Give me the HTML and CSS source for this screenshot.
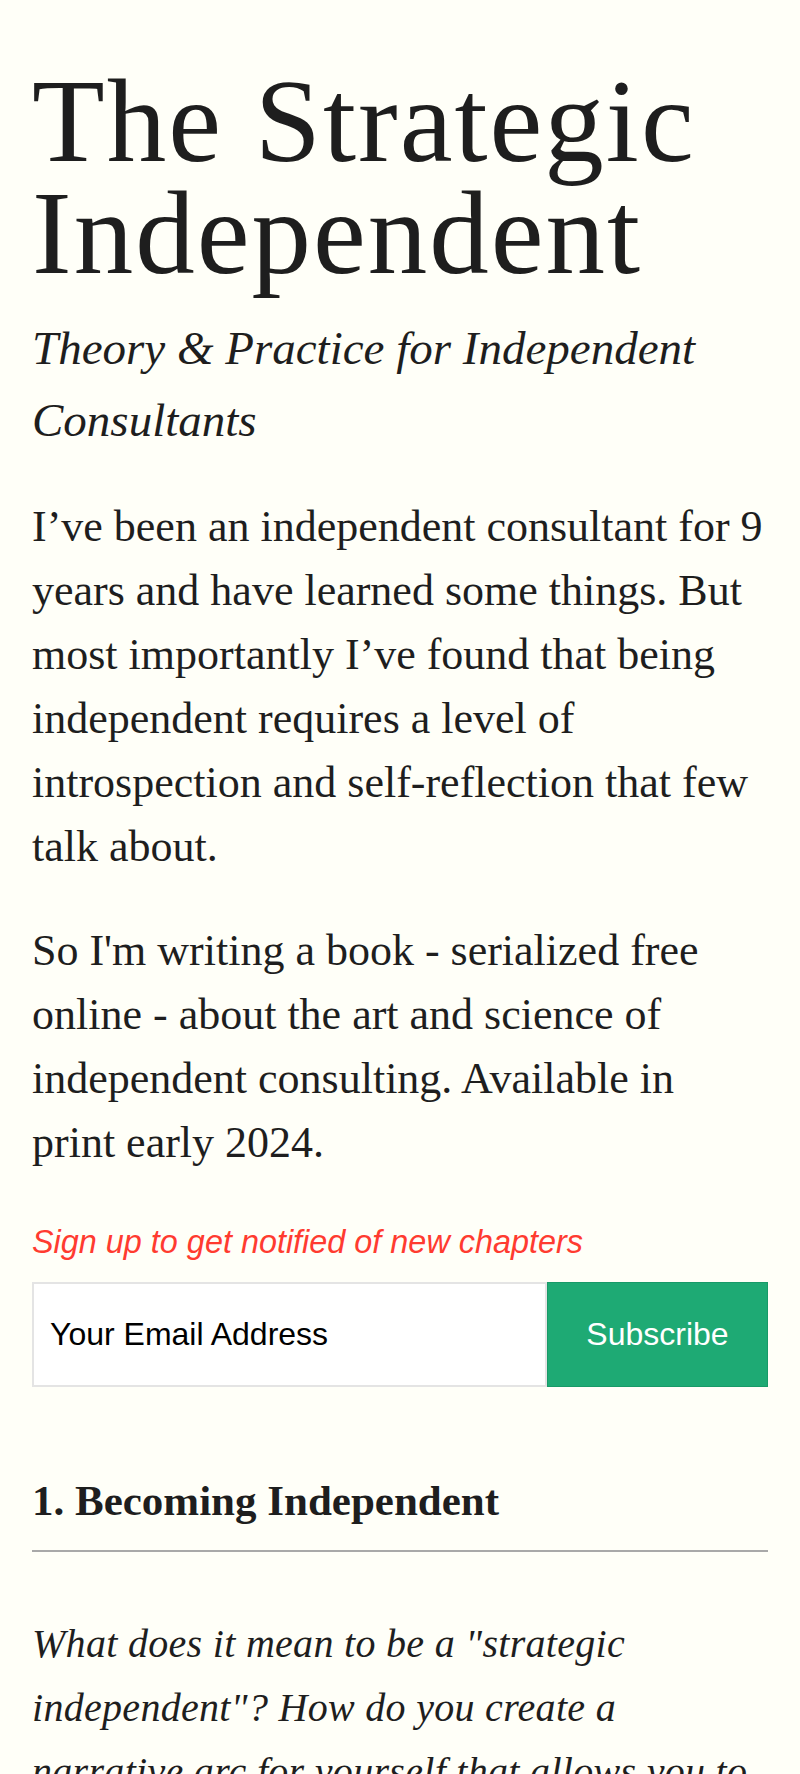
FILE: index.html
```html
<!DOCTYPE html>
<html lang="en">
<head>
<meta charset="utf-8">
<title>The Strategic Independent</title>
<link rel="stylesheet" href="styles.css">
</head>
<body>
<main class="page">
  <header class="masthead">
    <h1 class="title">The Strategic Independent</h1>
    <p class="subtitle">Theory &amp; Practice for Independent Consultants</p>
  </header>

  <section class="intro">
    <p>I’ve been an independent consultant for 9 years and have learned some things. But most importantly I’ve found that being independent requires a level of introspection and self-reflection that few talk about.</p>
    <p>So I'm writing a book - serialized free online - about the art and science of independent consulting. Available in print early 2024.</p>
  </section>

  <section class="signup">
    <p class="signup-label">Sign up to get notified of new chapters</p>
    <form class="signup-form">
      <input class="signup-input" type="email" placeholder="Your Email Address" aria-label="Your Email Address">
      <button class="signup-button" type="button">Subscribe</button>
    </form>
  </section>

  <article class="chapter">
    <h2 class="chapter-title">1. Becoming Independent</h2>
    <p class="chapter-lede">What does it mean to be a "strategic independent"? How do you create a narrative arc for yourself that allows you to thrive over the long term, on your own terms?</p>
  </article>
</main>
</body>
</html>
```

FILE: styles.css
```css
html, body {
  margin: 0;
  padding: 0;
}

body {
  background: #fffff8;
  color: #1e1e1e;
  font-family: "Liberation Serif", "Times New Roman", serif;
}

.page {
  padding: 65px 32px 0;
}

.masthead {
  margin: 0;
}

.title {
  margin: 0;
  font-size: 119px;
  line-height: 112px;
  font-weight: 400;
  letter-spacing: 2px;
}

.subtitle {
  margin: 23px 0 0;
  font-size: 47px;
  line-height: 72px;
  font-style: italic;
}

.intro {
  margin-top: 39px;
}

.intro p {
  margin: 0 0 40px;
  font-size: 44px;
  line-height: 64px;
}

.intro p:last-child {
  margin-bottom: 0;
}

.signup {
  margin-top: 48px;
}

.signup-label {
  margin: 0 0 21px;
  font-family: "Liberation Sans", Arial, sans-serif;
  font-style: italic;
  font-size: 32.4px;
  line-height: 38px;
  color: #ff3b30;
}

.signup-form {
  display: flex;
  height: 105px;
  margin: 0;
}

.signup-input {
  flex: 1;
  min-width: 0;
  box-sizing: border-box;
  height: 100%;
  margin: 0;
  padding: 0 16px;
  border: 2px solid #e4e4e4;
  border-radius: 0;
  background: #ffffff;
  font-family: "Liberation Sans", Arial, sans-serif;
  font-size: 32px;
  color: #000;
  outline: none;
}

.signup-input::placeholder {
  color: #000;
  opacity: 1;
}

.signup-button {
  width: 221px;
  box-sizing: border-box;
  height: 100%;
  margin: 0;
  padding: 0;
  border: 1px solid #189a68;
  border-radius: 0;
  background: #1eaa74;
  color: #ffffff;
  font-family: "Liberation Sans", Arial, sans-serif;
  font-size: 32px;
  cursor: pointer;
}

.chapter {
  margin-top: 88px;
}

.chapter-title {
  margin: 0;
  padding-bottom: 23px;
  border-bottom: 2px solid #a9a9a9;
  font-size: 43px;
  line-height: 52px;
  font-weight: 700;
}

.chapter-lede {
  margin: 60px 0 0;
  font-size: 40px;
  line-height: 64px;
  font-style: italic;
  letter-spacing: 0.3px;
}
```
